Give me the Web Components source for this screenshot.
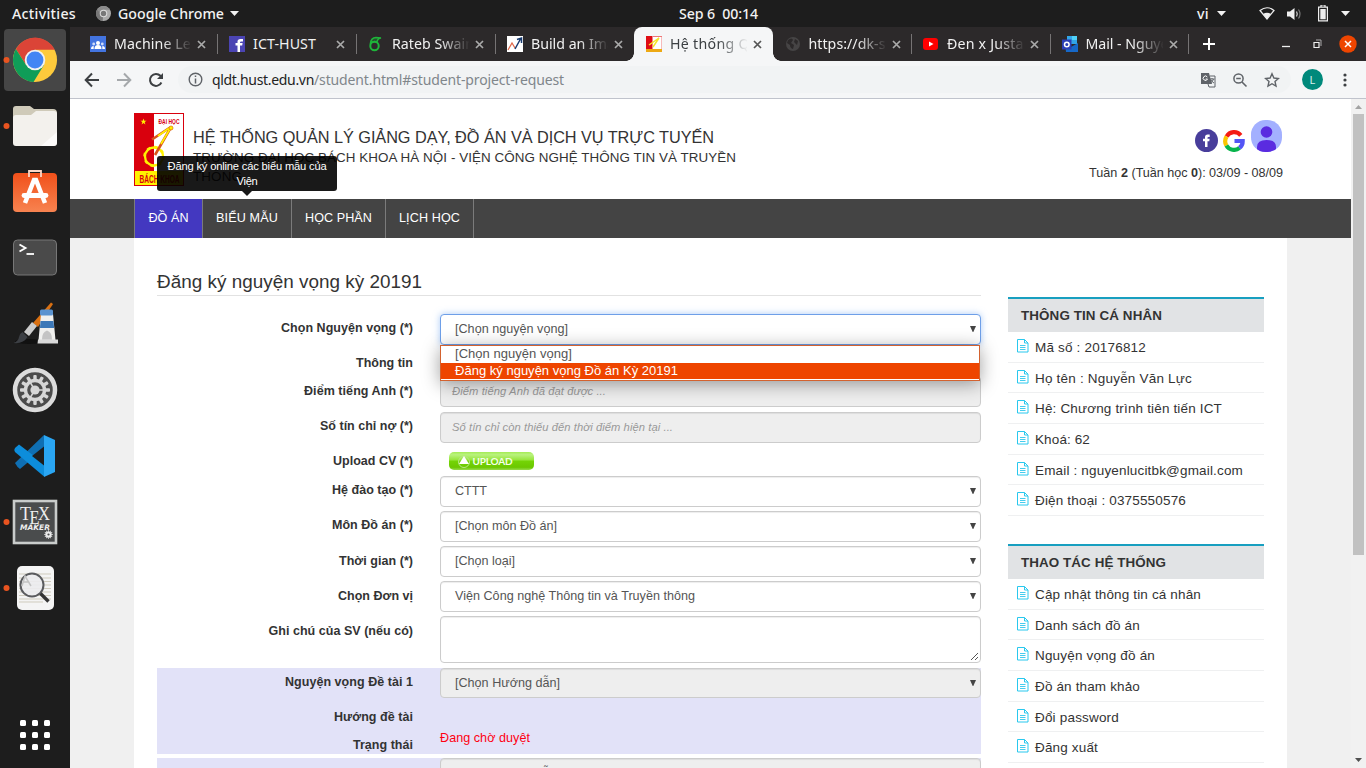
<!DOCTYPE html>
<html lang="vi">
<head>
<meta charset="utf-8">
<title>Hệ thống quản lý giảng dạy</title>
<style>
html,body{margin:0;height:768px;width:1366px;overflow:hidden;background:#1d1d1d}
body{display:grid;grid-template:27px 741px / 70px 1296px;font-family:"Liberation Sans",Arial,sans-serif}
gnome-bar{grid-column:1 / 3}
</style>
</head>
<body>
<gnome-bar></gnome-bar>
<app-dock></app-dock>
<browser-window></browser-window>
<script>
const define = (name, html, setup) => customElements.define(name, class extends HTMLElement {
  constructor(){ super(); this.attachShadow({mode:'open'}); }
  connectedCallback(){
    const t = document.createElement('template');
    t.innerHTML = typeof html === 'function' ? html(this) : html;
    this.shadowRoot.replaceChildren(t.content.cloneNode(true));
    if (setup) setup(this);
  }
});

/* Text line spaced out to a given width. */
define('fit-text', '<style>:host{display:inline-block;white-space:pre}span{display:inline-block}</style><span><slot></slot></span>', el => {
  const w = +el.getAttribute('w'), s = el.shadowRoot.querySelector('span');
  const n = [...el.textContent.normalize('NFC')].length, nat = s.getBoundingClientRect().width;
  if (w && nat) { el.style.width = w + 'px'; s.style.letterSpacing = ((w - nat) / n) + 'px'; }
});

define('gnome-bar', `
<style>
:host{display:flex;align-items:center;background:#1d1d1d;color:#f2f2f2;font:500 14.200px/27px "Noto Sans",sans-serif;position:relative;height:27px}
.a{margin-left:12px}.c{margin:0 7px 0 20px}.t{margin-left:6px}
.clock{margin-left:440px}.vi{margin-left:439px}.v2{margin-left:8px}
svg{display:block;flex:none}
</style>
<fit-text class="a" w="64">Activities</fit-text>
<svg class="c" width="15" height="15" viewBox="0 0 16 16"><circle cx="8" cy="8" r="8" fill="#aaa"/><path d="M8 8 1 4A8 8 0 0 0 7 16Z" fill="#777"/><path d="M8 4H15A8 8 0 0 0 1.4 3.500L5 9Z" fill="#8c8c8c"/><circle cx="8" cy="8" r="4" fill="#ddd"/><circle cx="8" cy="8" r="2.900" fill="#777"/></svg>
<fit-text w="106">Google Chrome</fit-text>
<svg class="t" width="9" height="5"><path d="M0 0h9l-4.500 5z" fill="#f2f2f2"/></svg>
<fit-text class="clock" w="79">Sep 6  00:14</fit-text>
<fit-text class="vi" w="12">vi</fit-text>
<svg class="v2" width="9" height="5"><path d="M0 0h9l-4.500 5z" fill="#f2f2f2"/></svg>
<svg style="margin-left:33px" width="16" height="13" viewBox="0 0 16 13"><path d="M1 3.500Q8-2 15 3.500L8 12Z" fill="none" stroke="#eee" stroke-width="1.200"/><path d="M4 7Q8 4.500 12 7L8 12Z" fill="#eee"/></svg>
<svg style="margin-left:12px" width="16" height="14" viewBox="0 0 16 14"><path d="M0 4.500h3L7.500 1v12L3 9.500H0Z" fill="#eee"/><path d="M9.500 4.500q1.500 2.500 0 5" stroke="#ccc" stroke-width="1.300" fill="none"/><path d="M11.500 2.500q3 4.500 0 9" stroke="#777" stroke-width="1.200" fill="none"/></svg>
<svg style="margin-left:15px" width="10" height="17" viewBox="0 0 10 17"><path d="M3 0h4v2H3zM.6 2.100h8.800v13.800H.6z" fill="none" stroke="#eee" stroke-width="1.200"/><path d="M2.300 4h5.400v10.300H2.300z" fill="#eee"/></svg>
<svg style="margin-left:13px" width="9" height="5"><path d="M0 0h9l-4.500 5z" fill="#f2f2f2"/></svg>
`);

const gear = Array.from({length:12},(_,i)=>`<rect x="-1.700" y="-15" width="3.400" height="5" rx="1" transform="rotate(${i*30})"/>`).join('');
const dockIcons = [
 ['chrome', 1, `<g transform="translate(22,22) scale(.98)"><circle r="22.500" fill="#fdca3c"/><path d="M0-10.500H20.300A22.500 22.500 0 0 0-19.500-11.200L-9.100 5Z" fill="#db4437"/><path d="M-19.500-11.200A22.500 22.500 0 0 0-1.500 22.400L9.100 5.200-9.100 5.200Z" fill="#0f9d58"/><circle r="10.500" fill="#f1f1f1"/><circle r="8.600" fill="#4285f4"/></g>`],
 ['files', 1, `<path d="M0 5q0-3 3-3h14l4 3h19q4 0 4 4v10H0Z" fill="#cfcab9"/><path d="M0 14q0-3 3-3h15l5-4h18q3 0 3 3v29q0 3-3 3H3q-3 0-3-3Z" fill="#f3f1ed"/><path d="M44 28v10q0 4-4 4H28Z" fill="#fff" opacity=".7"/>`],
 ['software', 0, `<defs><linearGradient id="o" x2="0" y2="1"><stop stop-color="#f1501a"/><stop offset="1" stop-color="#f78350"/></linearGradient></defs><rect x="0" y="3" width="44" height="39" rx="4" fill="url(#o)"/><path d="M16 7V1h12v6" fill="none" stroke="#fbd8c8" stroke-width="1.800"/><path d="M12 33 21 10h2l9 23" fill="none" stroke="#fff" stroke-width="4.500"/><path d="M11 25.500h22" stroke="#fff" stroke-width="4.800" stroke-linecap="round"/>`],
 ['terminal', 0, `<rect x=".5" y="4" width="43" height="35" rx="4" fill="#4a4a4a" stroke="#777"/><path d="M6.500 8.500l6 3.500-6 3.500" stroke="#fff" stroke-width="1.900" fill="none"/><path d="M13.500 18h7.500" stroke="#fff" stroke-width="1.800"/>`],
 ['paint', 0, `<ellipse cx="16" cy="39.500" rx="14" ry="2.500" fill="#111"/><path d="m38 .500 2 1.500L25 25l-5-4Z" fill="#d97012"/><path d="m19 20 5 4-8 10-5-4Z" fill="#ccc"/><path d="M9.500 30l5 5q-4 7-14 6 5-2 5.500-6 .5-3.500 3.500-5Z" fill="#3c3f44"/><path d="M28 12h12l2.500 26H25.500Z" fill="#f0f0ee"/><path d="M27.500 19h13l.6 7H27Z" fill="#3c78b8"/><rect x="27" y="7.500" width="13" height="6" rx="1.500" fill="#5b93d0"/><path d="M25 37.500h20v4H24.500Z" fill="#d9d9d9"/><path d="M29 37.500q0-7.500 5-9 5 1.500 5 9Z" fill="#c4c4c4"/>`],
 ['settings', 0, `<circle cx="22" cy="22" r="20" fill="#4c4c4c" stroke="#dcdcdc" stroke-width="4.500"/><g transform="translate(22,22)"><g fill="#d6d6d6">${gear}</g><circle r="9.500" fill="none" stroke="#d6d6d6" stroke-width="3.400"/><circle r="4.600" fill="#d6d6d6"/><path d="M3 0h6M-2-3l-3-5M-2 3l-3 5" stroke="#d6d6d6" stroke-width="1.500"/></g>`],
 ['code', 0, `<path d="M2 29 31 1l2 12L7 35Q4 33 2 29Z" fill="#0f6fb3"/><path d="M2 14 6 10.500 34 32l-3 10.500L2 18Q.5 16 2 14Z" fill="#0d8ddb"/><path d="M31 1l11 5v32l-11 5Z" fill="#2aa6f3"/><path d="M31 12.500v19L19 22Z" fill="#1d1d1d"/>`],
 ['texmaker', 1, `<rect x="1" y="1" width="42" height="42" fill="#4a4c4d" stroke="#c9cccb" stroke-width="2.600"/><g fill="#eee"><text x="7" y="20" font-family="Liberation Serif,serif" font-size="19" textLength="11" lengthAdjust="spacingAndGlyphs">T</text><text x="16.500" y="24" font-family="Liberation Serif,serif" font-size="19" textLength="10" lengthAdjust="spacingAndGlyphs">E</text><text x="25" y="20" font-family="Liberation Serif,serif" font-size="19" textLength="12" lengthAdjust="spacingAndGlyphs">X</text><text x="7" y="30" font-family="DejaVu Sans,sans-serif" font-weight="700" font-style="italic" font-size="7.500" textLength="30" lengthAdjust="spacingAndGlyphs">MAKER</text></g><g transform="translate(35.500,34.500) scale(.28)" fill="#eee">${gear}<circle r="7.500" fill="none" stroke="#eee" stroke-width="7"/></g>`],
 ['viewer', 1, `<rect x="4" y="0" width="37" height="44" rx="5" fill="#f4f4f4"/><path d="M6 8h32M6 12h32M6 15.500h32M6 19h32M6 22.500h32M6 26h32M6 29.500h32M6 33h32M6 36h24" stroke="#cfcbbd"/><circle cx="19" cy="19" r="11.500" fill="#ececee" fill-opacity=".9" stroke="#5a5b5e" stroke-width="2"/><path d="m9 20 3-10 6 10M10 16h6" stroke="#c4c4c4" stroke-width="1.500" fill="none"/><path d="m27.500 27.500 8 8" stroke="#333" stroke-width="3.400"/>`]
];
define('dock-item', el => `
<style>:host{display:flex;height:66px;width:70px;align-items:center;flex:none}
.tile{width:62px;height:62px;margin-left:4px;border-radius:4px;display:flex;align-items:center;justify-content:center}
:host([active]) .tile{background:#464646}
.dot{width:6px;height:6px;margin-right:-6px;flex:none;border-radius:50%;transform:translateX(3.500px)}
:host([running]) .dot{background:#e95420;z-index:1}svg{overflow:visible;display:block}</style>
<div class="dot"></div><div class="tile"><svg width="44" height="44">${(dockIcons.find(d=>d[0]===el.getAttribute('icon'))||[0,0,[4,16,28].map(x=>[4,16,28].map(y=>`<rect x="${x+3}" y="${y+3}" width="6" height="6" rx="1.500" fill="#fff"/>`).join('')).join('')])[2]}</svg></div>`);
define('app-dock', `<style>:host{display:flex;flex-direction:column;background:#1d1d1d;height:741px}.g{margin-top:auto}</style>
${dockIcons.map((d,i)=>`<dock-item icon="${d[0]}" ${d[1]?'running':''} ${i?'':'active'}></dock-item>`).join('')}<dock-item class="g" icon="grid"></dock-item>`);

define('browser-tab', `
<style>
:host{display:flex;align-items:center;width:139px;height:34px;color:#f1f1f1;font:14.200px/34px "Noto Sans",sans-serif;position:relative;flex:none}
:host([narrow]){width:138.500px}
.i{width:16px;height:16px;margin:0 8px 0 12px;flex:none;display:flex}
.t{width:77px;overflow:hidden;white-space:nowrap;-webkit-mask:linear-gradient(90deg,#000 48px,transparent 78px)}
:host([full]) .t{-webkit-mask:none}
.x{margin-left:6px;flex:none}
:host([sep])::after{content:"";position:absolute;right:-1px;top:7px;height:20px;width:1px;background:#767374}
:host([on]){background:#f5f6f7;color:#3c4043;border-radius:8px 8px 0 0;--x:#555}
:host([on])::before{content:"";position:absolute;left:-8px;right:-8px;bottom:0;height:8px;background:radial-gradient(circle at 0 0,transparent 7.500px,#f5f6f7 8px) left/8px 8px no-repeat,radial-gradient(circle at 100% 0,transparent 7.500px,#f5f6f7 8px) right/8px 8px no-repeat}
</style>
<span class="i"><slot name="icon"></slot></span><span class="t"><slot></slot></span>
<svg class="x" width="9" height="9"><path d="M1 1l7 7M8 1l-7 7" style="stroke:var(--x,#aaa)" stroke-width="1.700"/></svg>`);

define('tab-strip', `
<style>:host{display:flex;align-items:center;height:34px;background:#2c292a;padding-left:8px;box-sizing:border-box;width:1296px}
svg{display:block}.p{margin-left:14px}</style>
<browser-tab sep><svg slot="icon" width="16" height="16"><rect width="16" height="16" fill="#4374e0"/><circle cx="8" cy="7" r="2" fill="#fff"/><circle cx="3.700" cy="8" r="1.400" fill="#cfdcf8"/><circle cx="12.300" cy="8" r="1.400" fill="#cfdcf8"/><path d="M4.500 13q0-4 3.500-4t3.500 4ZM1 13q0-3 2.700-3V13ZM15 13q0-3-2.700-3V13Z" fill="#fff"/></svg><fit-text w="91">Machine Lear</fit-text></browser-tab>
<browser-tab sep full><svg slot="icon" width="16" height="16"><rect width="16" height="16" fill="#4b44b3"/><path d="M8.500 16V9.500H6.500V7h2V5.500Q8.500 3 11.500 3H14V5.400H12.300Q11 5.400 11 6.500V7h2.600l-.4 2.500H11V16Z" fill="#fff"/></svg><fit-text w="63">ICT-HUST</fit-text></browser-tab>
<browser-tab sep><svg slot="icon" width="16" height="16"><path d="M2.500 7Q3 2 8 1.500L13 2Q9.500 2.500 9 6Q6 4.500 2.500 7Z" fill="#1eb53a" fill-opacity=".25" stroke="#1eb53a" stroke-width="1.500"/><circle cx="6.500" cy="10" r="4.200" fill="none" stroke="#1eb53a" stroke-width="2"/></svg><fit-text w="82">Rateb Swain</fit-text></browser-tab>
<browser-tab><svg slot="icon" width="16" height="16"><rect width="16" height="16" fill="#fff"/><path d="m1 14 4-7 3 5" fill="none" stroke="#e06a4c" stroke-width="1.300"/><path d="m8 13 6-11M10 3.500 14.500 2v5" fill="none" stroke="#183b70" stroke-width="1.500"/></svg><fit-text w="84">Build an Ima</fit-text></browser-tab>
<browser-tab on narrow><svg slot="icon" width="16" height="16"><rect width="16" height="16" fill="#fff"/><path d="M0 0h6.500v13H0z" fill="#df0d14"/><path d="M0 13h16v3H0z" fill="#eda914"/><path d="M13 2 3 9M13 2 7 11" stroke="#f5e528" stroke-width="1.500"/><path d="M16 0v13M7 0.500h9" stroke="#e77"/></svg><fit-text w="89">Hệ thống Qu</fit-text></browser-tab>
<browser-tab sep narrow><svg slot="icon" width="16" height="16"><circle cx="8" cy="8" r="7" fill="#464445"/><path d="M3 4q4-3 5 0l-2 3 3 2-1 4q-3-1-3-4L2 7ZM10 3l3 2-1 4-3-3Z" fill="#2c292a"/></svg><fit-text w="77">https://dk-s</fit-text></browser-tab>
<browser-tab sep narrow><svg slot="icon" width="16" height="16"><rect x="0" y="2" width="15" height="12" rx="3" fill="#f00"/><path d="m6 5.500 4.500 2.500L6 10.500Z" fill="#fff"/></svg><fit-text w="82">Đen x Justat</fit-text></browser-tab>
<browser-tab sep narrow><svg slot="icon" width="16" height="16"><path d="M5 0h10v8H5z" fill="#32a5e8"/><path d="M10 0h5v4h-5z" fill="#4fd0f7"/><path d="M3 7l6 4 7-4v9H4Z" fill="#1768c8"/><rect x="0" y="3.500" width="9.500" height="10" fill="#2b3fb5"/><circle cx="4.800" cy="8.500" r="2.300" fill="none" stroke="#fff" stroke-width="1.500"/></svg><fit-text w="83">Mail - Nguye</fit-text></browser-tab>
<svg class="p" width="14" height="14"><path d="M7 1v12M1 7h12" stroke="#fff" stroke-width="2"/></svg>
<svg style="margin-left:66px" width="8" height="14"><path d="M0 9.500h8" stroke="#eee" stroke-width="1.300"/></svg>
<svg style="margin-left:23px" width="9" height="10"><path d="M1 3.500h5v5H1z" fill="none" stroke="#eee" stroke-width="1.200"/><path d="M3 1h5v6" fill="none" stroke="#aaa"/></svg>
<svg style="margin-left:17px" width="18" height="18"><circle cx="9" cy="9" r="8.700" fill="#ee4500"/><path d="m6 6 6 6M12 6l-6 6" stroke="#fff" stroke-width="1.500"/></svg>`);

define('browser-toolbar', `
<style>:host{display:flex;align-items:center;height:38px;background:#f5f6f7;border-bottom:1px solid #c0c3cc;box-sizing:border-box;padding:0 0 0 14px;font:14px/27px "Noto Sans",sans-serif;color:#222}
svg{display:block;flex:none}.m{margin-left:16px}
.pill{display:flex;align-items:center;width:1113px;height:27px;border-radius:14px;background:#f1f3f4;margin-left:14px;box-sizing:border-box;padding-left:10px}
.info{margin-right:9px}.g{color:#80868b}
.a{width:21px;height:21px;border-radius:50%;background:#00897b;color:#d8efec;font-size:11px;line-height:21px;text-align:center;margin-left:11px}
.d{margin-left:20px}</style>
<svg width="16" height="16"><path d="M15 8H2M8 1.500 1.700 8 8 14.500" fill="none" stroke="#3d4043" stroke-width="2"/></svg>
<svg class="m" width="16" height="16"><path d="M1 8H14M8 1.500 14.300 8 8 14.500" fill="none" stroke="#a5a8ab" stroke-width="2"/></svg>
<svg class="m" width="16" height="16"><path d="M13.400 10.500A6 6 0 1 1 12.400 3.800L14 5.500" fill="none" stroke="#3d4043" stroke-width="2"/><path d="M15 1v6H9Z" fill="#3d4043"/></svg>
<div class="pill">
<svg class="info" width="15" height="15"><circle cx="7.500" cy="7.500" r="6.300" fill="none" stroke="#5f6368" stroke-width="1.400"/><path d="M7.500 6.500v5M7.500 3.500v1.600" stroke="#5f6368" stroke-width="1.500"/></svg>
<fit-text w="102">qldt.hust.edu.vn</fit-text><fit-text class="g" w="250">/student.html#student-project-request</fit-text>
<svg style="margin-left:636px" width="16" height="16"><path d="M1 1h8l3 11H1z" fill="#5f6368"/><path d="M10 4h5v11H9l-1-3" fill="none" stroke="#5f6368"/><path d="M7.300 5A2.200 2.200 0 1 0 7.500 7H5.700" fill="none" stroke="#fff"/><path d="M9.500 7h5M12 6v1M13.500 7q-1 3-3 4M11 8q1 2 3 3" stroke="#5f6368" fill="none"/></svg>
<svg class="m" width="16" height="16"><circle cx="6.500" cy="6.500" r="4.600" fill="none" stroke="#5f6368" stroke-width="1.500"/><path d="M4.200 6.500h4.600M10 10l4.500 4.500" stroke="#5f6368" stroke-width="1.600"/></svg>
<svg class="m" width="16" height="16"><path d="m8 1.800 1.900 4.200 4.500.5-3.400 3 1 4.500L8 11.700 4 14l1-4.500-3.400-3L6.100 6Z" fill="none" stroke="#5f6368" stroke-width="1.400"/></svg>
</div><div class="a">L</div>
<svg class="d" width="4" height="14"><g fill="#3d4043"><circle cx="2" cy="2" r="1.600"/><circle cx="2" cy="7" r="1.600"/><circle cx="2" cy="12" r="1.600"/></g></svg>`);

define('site-header', `
<style>:host{display:flex;height:100px;background:#fff;color:#333;box-sizing:border-box;padding:14px 67px 0 64px;position:relative}
svg{display:block;flex:none}.txt{margin-left:9px;width:560px}
.h{font-size:16.300px;line-height:20px;margin-top:14px;color:#333}.s{font-size:13.400px;line-height:20px;white-space:nowrap;margin-top:1px}
.r{margin-left:auto;display:flex;flex-direction:column;align-items:flex-end}
.ic{display:flex;align-items:flex-end;margin:6px 2px 0 0;height:33px}
.w{font-size:12.600px;line-height:16px;margin:13px 1px 0 0}
fit-text{display:block}.w fit-text{display:inline-block}
.tip{position:absolute;left:87px;top:57px;width:180px;height:35px;box-sizing:border-box;background:rgba(0,0,0,.9);border-radius:3px;color:#fff;font-size:11.200px;line-height:15px;padding-top:3px;text-align:center;z-index:5;display:flex;flex-direction:column;align-items:center}
.tip::after{content:"";position:absolute;top:35px;left:85px;border:5px solid transparent;border-bottom:0;border-top-color:rgba(0,0,0,.9)}
</style>
<svg width="50" height="73" viewBox="0 0 50 73"><rect width="50" height="73" fill="#d9000d"/><path d="M20 1h29v57H20z" fill="#fff"/><path d="M1 58h48v14H1z" fill="#fff200"/><path d="m9.500 5.500.8 2.200h2.300l-1.900 1.400.7 2.300-1.900-1.400-1.900 1.400.7-2.300-1.900-1.400h2.300Z" fill="#fff200"/><circle cx="20" cy="43.500" r="9" fill="none" stroke="#fff200" stroke-width="2.300"/><circle cx="20" cy="43.500" r="10" fill="none" stroke="#fff200" stroke-width="1.500" stroke-dasharray="3.500 4.350"/><path d="M36 14.500 18 26.500M36.500 15 21 42" stroke="#d9551a" stroke-width="2.600"/><path d="M36 14.500 24 23M36.500 15 27 31" stroke="#fff200" stroke-width="1.600"/><circle cx="37" cy="15" r="2" fill="#fff200" stroke="#d60" stroke-width=".7"/><g fill="#d9000d" font-family="Liberation Sans,sans-serif" font-weight="700"><text x="24.500" y="10.500" font-size="7" textLength="21" lengthAdjust="spacingAndGlyphs">ĐẠI HỌC</text><text x="5.500" y="70" font-size="11" textLength="40" lengthAdjust="spacingAndGlyphs">BÁCH KHOA</text></g></svg>
<div class="txt"><fit-text class="h" w="521">HỆ THỐNG QUẢN LÝ GIẢNG DẠY, ĐỒ ÁN VÀ DỊCH VỤ TRỰC TUYẾN</fit-text>
<fit-text class="s" w="543">TRƯỜNG ĐẠI HỌC BÁCH KHOA HÀ NỘI - VIỆN CÔNG NGHỆ THÔNG TIN VÀ TRUYỀN</fit-text><fit-text style="margin-top:-1px" class="s" w="49">THÔNG</fit-text></div>
<div class="r"><div class="ic">
<svg style="margin-right:5px" width="23" height="23"><circle cx="11.500" cy="11.500" r="11.500" fill="#483d9b"/><path d="M10 18v-5.700H8V9.800h2V8.200Q10 5.500 12.700 5.500h2v2.400h-1.200q-1 0-1 .9v1h2.100l-.3 2.500h-1.800V18Z" fill="#fff"/></svg>
<svg style="margin-right:6px" width="22" height="22" viewBox="0 0 22 22"><g fill="none" stroke-width="4.200"><path d="M17.800 5.300A8.700 8.700 0 0 0 3.600 6.500" stroke="#f41b14"/><path d="M3.600 6.500A8.700 8.700 0 0 0 3.400 15.500" stroke="#fbc500"/><path d="M3.400 15.500A8.700 8.700 0 0 0 16.500 17.900" stroke="#08b44c"/><path d="M16.500 17.900A8.700 8.700 0 0 0 19.700 11H11.500" stroke="#5355f5"/></g></svg>
<svg width="31" height="32"><defs><clipPath id="c"><rect width="31" height="32" rx="14.500"/></clipPath></defs><g clip-path="url(#c)"><rect width="31" height="32" fill="#a3b0ff"/><circle cx="15.500" cy="12" r="5.800" fill="#5a2be0"/><path d="M6 32V27q0-7 9.500-7T25 27v5Z" fill="#5a2be0"/></g></svg>
</div><div class="w"><fit-text w="32">Tuần </fit-text><b>2</b><fit-text w="63"> (Tuần học </fit-text><b>0</b><fit-text w="85">): 03/09 - 08/09</fit-text></div></div>
<div class="tip"><fit-text w="159">Đăng ký online các biểu mẫu của</fit-text><fit-text w="21">Viện</fit-text></div>`);

define('nav-item', '<style>:host{display:flex;justify-content:center;border-right:1px solid #7b7b7b;box-sizing:border-box;height:39px;color:#fff;font-size:12.600px;line-height:38px}:host([on]){background:#4338c0}</style><slot></slot>');
define('nav-menu', `<style>:host{display:flex;height:39px;background:#444;padding-left:64px}div{display:flex;border-left:1px solid #7b7b7b}</style>
<div><nav-item on style="width:68px"><fit-text w="40">ĐỒ ÁN</fit-text></nav-item><nav-item style="width:89px"><fit-text w="62">BIỂU MẪU</fit-text></nav-item><nav-item style="width:94px"><fit-text w="67">HỌC PHẦN</fit-text></nav-item><nav-item style="width:88px"><fit-text w="61">LỊCH HỌC</fit-text></nav-item></div>`);

define('form-row', el => `
<style>:host{display:flex;height:${el.getAttribute('h')}px}
.l{width:256px;text-align:right;font-weight:700;font-size:12.500px;line-height:16px;padding-top:${el.getAttribute('o')||6}px;color:#333;margin-right:27px;white-space:nowrap}
.f{width:541px;display:flex;flex-direction:column;align-items:flex-start;position:relative}</style>
<div class="l"><fit-text w="${el.getAttribute('w')}">${el.getAttribute('label')}</fit-text></div><div class="f"><slot></slot></div>`);

define('select-box', `
<style>:host{display:flex;align-items:center;box-sizing:border-box;width:541px;height:31px;border:1px solid #ccc;border-radius:4px;background:#fff;box-shadow:inset 0 1px 1px rgba(0,0,0,.075);padding:0 4px 1px 14px;color:#555;font-size:12.600px}
:host([disabled]){background:#eee}
:host([focus]){border-color:#6e9fe8;box-shadow:0 0 7px rgba(102,160,240,.55)}
svg{margin-left:auto}</style><slot></slot><svg width="6" height="6"><path d="M0 0h6L3.300 6h-.6z" fill="#444"/></svg>`);
define('text-field', `
<style>:host{display:flex;align-items:center;box-sizing:border-box;width:541px;height:31px;border:1px solid #ccc;border-radius:4px;background:#eee;box-shadow:inset 0 1px 1px rgba(0,0,0,.075);padding:0 11px 1px;color:#999;font-size:11.200px;font-style:italic}</style><slot></slot>`);
define('option-list', `
<style>:host{position:absolute;left:0;top:31px;width:540px;height:36px;box-sizing:border-box;border:1px solid #d3622f;background:#fff;box-shadow:0 3px 18px rgba(0,0,0,.38);font-size:13px;line-height:16px;color:#555;z-index:4}
div{padding-left:14px;height:17px}.s{background:#ee4500;color:#fff;height:16px}</style>
<div><fit-text w="117">[Chọn nguyện vọng]</fit-text></div><div class="s"><fit-text w="223">Đăng ký nguyện vọng Đồ án Kỳ 20191</fit-text></div>`);

define('request-form', `
<style>:host{display:block;width:824px}
h2{font-size:18.900px;font-weight:400;line-height:24px;height:25px;margin:0 0 18px;border-bottom:1px solid #e2e2e2;color:#333}
.area{width:541px;height:47px;box-sizing:border-box;border:1px solid #ccc;border-radius:4px;background:#fff;box-shadow:inset 0 1px 1px rgba(0,0,0,.075);display:flex;align-items:flex-end;justify-content:flex-end}
.blk{background:#e2e2f8;height:86px;margin-bottom:4px;overflow:hidden}
.up{display:block;margin:5px 0 0 9px}.red{color:#ff0012;font-size:12.600px;line-height:16px}</style>
<h2><fit-text w="265">Đăng ký nguyện vọng kỳ 20191</fit-text></h2>
<form-row h="35" w="132" label="Chọn Nguyện vọng (*)"><select-box focus><fit-text w="113">[Chọn nguyện vọng]</fit-text></select-box><option-list></option-list></form-row>
<form-row h="27" w="57" label="Thông tin"></form-row>
<form-row h="36" o="7" w="109" label="Điểm tiếng Anh (*)"><text-field><fit-text w="154">Điểm tiếng Anh đã đạt được ...</fit-text></text-field></form-row>
<form-row h="35" w="93" label="Số tín chỉ nợ (*)"><text-field><fit-text w="221">Số tín chỉ còn thiếu đến thời điểm hiện tại ...</fit-text></text-field></form-row>
<form-row h="29" w="80" label="Upload CV (*)"><svg class="up" width="85" height="18"><defs><linearGradient id="g" x2="0" y2="1"><stop stop-color="#a4ec55"/><stop offset=".15" stop-color="#b9f27e"/><stop offset=".45" stop-color="#96e53a"/><stop offset=".5" stop-color="#74d406"/><stop offset=".85" stop-color="#6cc800"/><stop offset="1" stop-color="#98dc50"/></linearGradient></defs><rect width="85" height="18" rx="5" fill="url(#g)"/><circle cx="15" cy="10" r="5.500" fill="none" stroke="#b9e68a"/><path d="m15 4 5 8H10Z" fill="#fff"/><text x="23.500" y="13" font-family="Lato,sans-serif" font-weight="700" font-size="10" fill="#f4ffe8" textLength="40">UPLOAD</text></svg></form-row>
<form-row h="35" w="81" label="Hệ đào tạo (*)"><select-box><fit-text w="32">CTTT</fit-text></select-box></form-row>
<form-row h="35" w="81" label="Môn Đồ án (*)"><select-box><fit-text w="102">[Chọn môn Đồ án]</fit-text></select-box></form-row>
<form-row h="35" o="7" w="74" label="Thời gian (*)"><select-box><fit-text w="60">[Chọn loại]</fit-text></select-box></form-row>
<form-row h="35" o="7" w="75" label="Chọn Đơn vị"><select-box><fit-text w="240">Viện Công nghệ Thông tin và Truyền thông</fit-text></select-box></form-row>
<form-row h="52" o="7" w="144.500" label="Ghi chú của SV (nếu có)"><div class="area"><svg width="10" height="10"><path d="M1 8 8 1M5 8l3-3" stroke="#555"/></svg></div></form-row>
<div class="blk"><form-row h="35" w="128" label="Nguyện vọng Đề tài 1"><select-box disabled style="height:30px"><fit-text w="105">[Chọn Hướng dẫn]</fit-text></select-box></form-row>
<form-row h="28" w="79" label="Hướng đề tài"></form-row><form-row h="23" w="60" label="Trạng thái"><fit-text class="red" style="margin-top:-1px" w="90">Đang chờ duyệt</fit-text></form-row></div>
<div class="blk"><form-row h="35" o="8" w="128" label="Nguyện vọng Đề tài 2"><select-box disabled style="height:30px"><fit-text w="105">[Chọn Hướng dẫn]</fit-text></select-box></form-row></div>`);

define('panel-item', `
<style>:host{display:flex;height:30.670px;box-sizing:border-box;border-bottom:1px solid #eff0f1;padding-left:9px;font-size:13.500px;line-height:31px;color:#333}svg{margin:7px 7px 0 0;flex:none}</style>
<svg width="11" height="13" style="overflow:visible"><path d="M.5.500h7l3.500 3.500v9H.5Z" fill="#fff" stroke="#29c8ee"/><path d="M7.500.500V4H11" fill="none" stroke="#29c8ee"/><path d="M3 6.500h5.500M3 8.500h5.500M3 10.500h5.500" stroke="#45cdee"/></svg><slot></slot>`);
define('side-panel', el => `<style>:host{display:block;width:256px;margin-bottom:28px}
.h{border-top:2px solid #189fc0;background:#e1e3e5;height:33px;font-weight:700;font-size:13.400px;line-height:33px;padding-left:13px;color:#333}</style>
<div class="h"><fit-text w="${el.getAttribute('w')}">${el.getAttribute('heading')}</fit-text></div><slot></slot>`);

define('scroll-bar', `<style>:host{display:flex;flex-direction:column;align-items:center;width:15px;background:#f1f1f1;flex:none}.t{width:11px;height:441px;background:#c1c1c1}svg{margin:6px 0 5px}.b{margin:auto 0 6px}</style>
<svg width="7" height="4"><path d="M0 4 3.500 0 7 4z" fill="#a3a3a3"/></svg><div class="t"></div><svg class="b" width="7" height="4"><path d="M0 0h7L3.500 4z" fill="#505050"/></svg>`);

const items = a => a.map(([t,w])=>`<panel-item><fit-text w="${w}">${t}</fit-text></panel-item>`).join('');
define('browser-window', `
<style>:host{display:flex;flex-direction:column;width:1296px;height:741px;overflow:hidden}
.v{display:flex;height:669px;overflow:hidden}.p{width:1281px;background:#f0f0f0;overflow:hidden}
.c{width:1130px;height:531px;margin-left:64px;background:#fff;display:flex;padding-left:23px}
request-form{padding-top:32px}.side{margin:59px 0 0 27px}</style>
<tab-strip></tab-strip><browser-toolbar></browser-toolbar>
<div class="v"><div class="p"><site-header></site-header><nav-menu></nav-menu>
<div class="c"><request-form></request-form><div class="side">
<side-panel heading="THÔNG TIN CÁ NHÂN" w="141">${items([['Mã số : 20176812',111],['Họ tên : Nguyễn Văn Lực',157],['Hệ: Chương trình tiên tiến ICT',187],['Khoá: 62',55],['Email : nguyenlucitbk@gmail.com',208],['Điện thoại : 0375550576',151]])}</side-panel>
<side-panel heading="THAO TÁC HỆ THỐNG" w="145">${items([['Cập nhật thông tin cá nhân',166],['Danh sách đồ án',105],['Nguyện vọng đồ án',120],['Đồ án tham khảo',105],['Đổi password',84],['Đăng xuất',63]])}</side-panel>
</div></div></div><scroll-bar></scroll-bar></div>`);
</script>
</body>
</html>
